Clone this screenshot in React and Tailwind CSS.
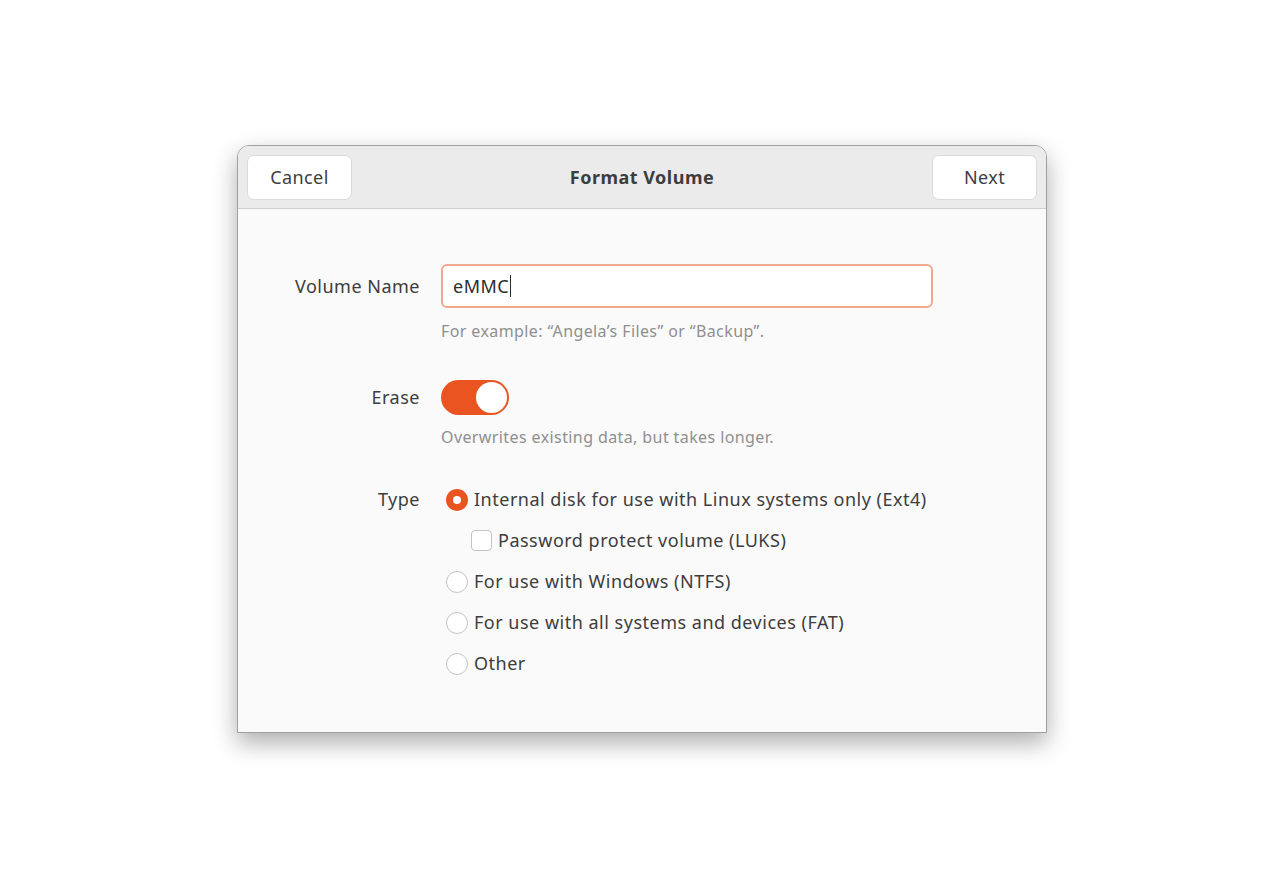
import { useState } from 'react'

const font = { fontFamily: '"Noto Sans", "Open Sans", sans-serif' }

function Radio({ checked }) {
  if (checked) {
    return (
      <span className="w-[22px] h-[22px] rounded-full bg-[#e95420] flex items-center justify-center shrink-0">
        <span className="w-[8px] h-[8px] rounded-full bg-white" />
      </span>
    )
  }
  return <span className="w-[22px] h-[22px] rounded-full border border-[#c4c4c4] bg-white shrink-0" />
}

export default function App() {
  const [erase, setErase] = useState(true)
  const [type, setType] = useState('ext4')

  const options = [
    { id: 'ext4', label: 'Internal disk for use with Linux systems only (Ext4)' },
    { id: 'ntfs', label: 'For use with Windows (NTFS)' },
    { id: 'fat', label: 'For use with all systems and devices (FAT)' },
    { id: 'other', label: 'Other' },
  ]

  return (
    <div className="w-[1280px] h-[870px] bg-white flex justify-center pt-[145px] pl-[4px]" style={font}>
      <div className="w-[810px] h-[588px] flex flex-col border border-[#a0a0a0] rounded-t-[12px] overflow-hidden shadow-[0_10px_24px_rgba(0,0,0,0.32)] bg-[#fafafa]">
        <div className="h-[63px] bg-[#ebebeb] border-b border-[#cfcfcf] flex items-center justify-between px-[9px] shrink-0">
          <button className="w-[105px] h-[45px] bg-white rounded-[7px] border border-[#dadada] text-[18px] tracking-[0.4px] text-[#3d3d3d]">
            Cancel
          </button>
          <div className="text-[18px] tracking-[0.5px] font-bold text-[#3d3d3d]">Format Volume</div>
          <button className="w-[105px] h-[45px] bg-white rounded-[7px] border border-[#dadada] text-[18px] tracking-[0.4px] text-[#3d3d3d]">
            Next
          </button>
        </div>

        <div className="flex-1 grid grid-cols-[182px_1fr] content-start gap-x-[21px] pt-[55px] text-[18px] tracking-[0.5px] text-[#3d3d3d]">
          <div className="text-right h-[44px] flex items-center justify-end">Volume Name</div>
          <div>
            {/* focused entry, caret drawn after the text */}
            <div className="w-[492px] h-[44px] rounded-[6px] border-2 border-[#f1a88c] bg-white flex items-center px-[10px] text-[#2d2d2d]">
              <span>eMMC</span>
              <span className="w-[1px] h-[22px] bg-[#2d2d2d] ml-[1px]" />
            </div>
            <div className="text-[16px] leading-[22px] tracking-[0.4px] text-[#8f8f8f] mt-[12px]">
              For example: “Angela’s Files” or “Backup”.
            </div>
          </div>

          <div className="text-right h-[35px] flex items-center justify-end mt-[38px]">Erase</div>
          <div className="mt-[38px]">
            <button
              onClick={() => setErase(!erase)}
              className={`w-[68px] h-[35px] rounded-full flex items-center px-[2px] ${erase ? 'bg-[#e95420] justify-end' : 'bg-[#d5d5d5] justify-start'}`}
            >
              <span className="w-[31px] h-[31px] rounded-full bg-white" />
            </button>
            <div className="text-[16px] leading-[22px] tracking-[0.4px] text-[#8f8f8f] mt-[11px]">
              Overwrites existing data, but takes longer.
            </div>
          </div>

          <div className="text-right h-[41px] flex items-center justify-end mt-[31px]">Type</div>
          <div className="mt-[31px] pl-[5px] flex flex-col">
            {options.map((o) => (
              <div key={o.id}>
                <button onClick={() => setType(o.id)} className="h-[41px] flex items-center gap-[6px] tracking-[0.5px]">
                  <Radio checked={type === o.id} />
                  <span>{o.label}</span>
                </button>
                {o.id === 'ext4' && (
                  <div className="h-[41px] flex items-center gap-[6px] pl-[25px]">
                    <span className="w-[21px] h-[21px] rounded-[4px] border border-[#c4c4c4] bg-white" />
                    <span>Password protect volume (LUKS)</span>
                  </div>
                )}
              </div>
            ))}
          </div>
        </div>
      </div>
    </div>
  )
}
